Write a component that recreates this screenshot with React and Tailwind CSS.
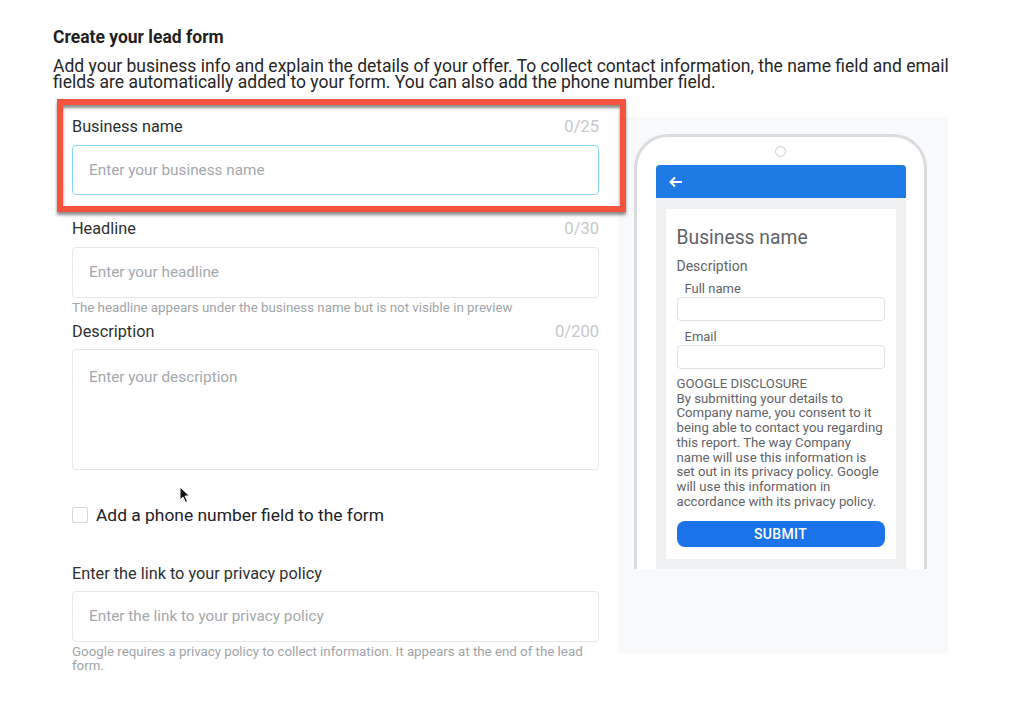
import React from "react";

const font = { fontFamily: "Roboto, 'Liberation Sans', sans-serif" };

function Counter({ children }) {
  return <span className="text-[16.5px] text-[#c4c7cb]">{children}</span>;
}

const disclosure = [
  "GOOGLE DISCLOSURE",
  "By submitting your details to",
  "Company name, you consent to it",
  "being able to contact you regarding",
  "this report. The way Company",
  "name will use this information is",
  "set out in its privacy policy. Google",
  "will use this information in",
  "accordance with its privacy policy.",
];

export default function App() {
  return (
    <div className="w-[1024px] h-[701px] bg-white overflow-hidden relative" style={font}>
      <div className="pl-[53px] pt-[27px]">
        <h1 className="text-[17.5px] leading-[20px] font-bold text-[#1f1f1f]">Create your lead form</h1>
        <p className="mt-[11px] w-[905px] text-[17.5px] leading-[16px] text-[#262626]">
          Add your business info and explain the details of your offer. To collect contact information, the name field and email fields are automatically added to your form. You can also add the phone number field.
        </p>
      </div>

      <div className="flex pl-[72px] mt-[27px]">
        {/* left form */}
        <div className="w-[527px] flex flex-col">
          <div className="relative">
            <div className="absolute left-[-15px] top-[-18px] w-[569px] h-[113px] border-[6px] border-[#f4533f] shadow-[0_3px_3px_rgba(0,0,0,0.45),inset_0_3px_3px_rgba(0,0,0,0.45)]" />
            <div className="flex justify-between items-center h-5">
              <span className="text-[16.3px] text-[#2d2f31]">Business name</span>
              <Counter>0/25</Counter>
            </div>
            <div className="mt-2 h-[50px] border border-[#8fd3f4] rounded-[4px] flex items-center px-4 text-[15.3px] text-[#a4a8ad]">
              Enter your business name
            </div>
          </div>

          <div className="mt-6 flex justify-between items-center h-5">
            <span className="text-[16.3px] text-[#2d2f31]">Headline</span>
            <Counter>0/30</Counter>
          </div>
          <div className="mt-2 h-[51px] border border-[#e6e7e9] rounded-[4px] flex items-center px-4 text-[15.3px] text-[#a4a8ad]">
            Enter your headline
          </div>
          <div className="mt-[3px] text-[13.3px] leading-[14px] text-[#a0a4a9]">
            The headline appears under the business name but is not visible in preview
          </div>

          <div className="mt-[7px] flex justify-between items-center h-5">
            <span className="text-[16.3px] text-[#2d2f31]">Description</span>
            <Counter>0/200</Counter>
          </div>
          <div className="mt-[7px] h-[121px] border border-[#e6e7e9] rounded-[4px] px-4 pt-[17px] text-[15.3px] leading-[20px] text-[#a4a8ad]">
            Enter your description
          </div>

          <div className="mt-[35px] flex items-center h-5 gap-2">
            <div className="w-4 h-4 border border-[#d6d8db] rounded-[2px]" />
            <span className="text-[17.4px] text-[#202124]">Add a phone number field to the form</span>
          </div>

          <div className="mt-[39px] flex items-center h-5">
            <span className="text-[16.3px] text-[#2d2f31]">Enter the link to your privacy policy</span>
          </div>
          <div className="mt-[7px] h-[51px] border border-[#e6e7e9] rounded-[4px] flex items-center px-4 text-[15.3px] text-[#a4a8ad]">
            Enter the link to your privacy policy
          </div>
          <div className="mt-[3px] pr-2 text-[13.3px] leading-[14px] text-[#a0a4a9]">
            Google requires a privacy policy to collect information. It appears at the end of the lead form.
          </div>
        </div>

        {/* right preview */}
        <div className="ml-[19px] w-[330px] h-[536px] bg-[#f8f9fb] pt-[17px] pl-4">
          <div className="w-[293px] h-[435px] bg-white border-[3px] border-b-0 border-[#d9dbde] rounded-t-[34px] flex flex-col items-center">
            <div className="mt-[9px] w-[11px] h-[11px] rounded-full border border-[#c9cbcf]" />
            <div className="mt-[8px] w-[250px] flex-1 bg-[#f0f1f3] flex flex-col">
              <div className="h-[33px] bg-[#1e7be6] rounded-t-[4px] flex items-center pl-[13px]">
                <svg width="14" height="12" viewBox="0 0 14 12" fill="none">
                  <path d="M13 6H2M6 1.5L1.5 6L6 10.5" stroke="white" strokeWidth="2" />
                </svg>
              </div>
              <div className="mx-[10px] mt-[11px] h-[350px] bg-white px-[11px] pt-[17px] text-[#5f6368]">
                <div className="text-[19.3px] leading-[24px]">Business name</div>
                <div className="mt-[8px] text-[14px] leading-[16px]">Description</div>
                <div className="mt-[7px] pl-[8px] text-[13px] leading-[15px]">Full name</div>
                <div className="mt-[1px] h-[24px] border border-[#dfe1e4] rounded-[4px]" />
                <div className="mt-[8px] pl-[8px] text-[13px] leading-[15px]">Email</div>
                <div className="mt-[1px] h-[24px] border border-[#dfe1e4] rounded-[4px]" />
                <div className="mt-[8px] text-[13.2px] leading-[14.7px]">
                  {disclosure.map((l) => (
                    <div key={l} className="whitespace-nowrap">{l}</div>
                  ))}
                </div>
                <div className="mt-[12px] h-[26px] bg-[#1a73e8] rounded-[8px] flex items-center justify-center text-white text-[14px] font-medium tracking-wide">
                  SUBMIT
                </div>
              </div>
            </div>
          </div>
        </div>
      </div>

      {/* mouse cursor */}
      <svg className="absolute left-[179px] top-[486px]" width="12" height="18" viewBox="0 0 12 18">
        <path d="M1 1 L1 14 L4 11 L6.5 16.5 L8.5 15.5 L6 10 L10.5 10 Z" fill="#111" stroke="white" strokeWidth="1" />
      </svg>
    </div>
  );
}
